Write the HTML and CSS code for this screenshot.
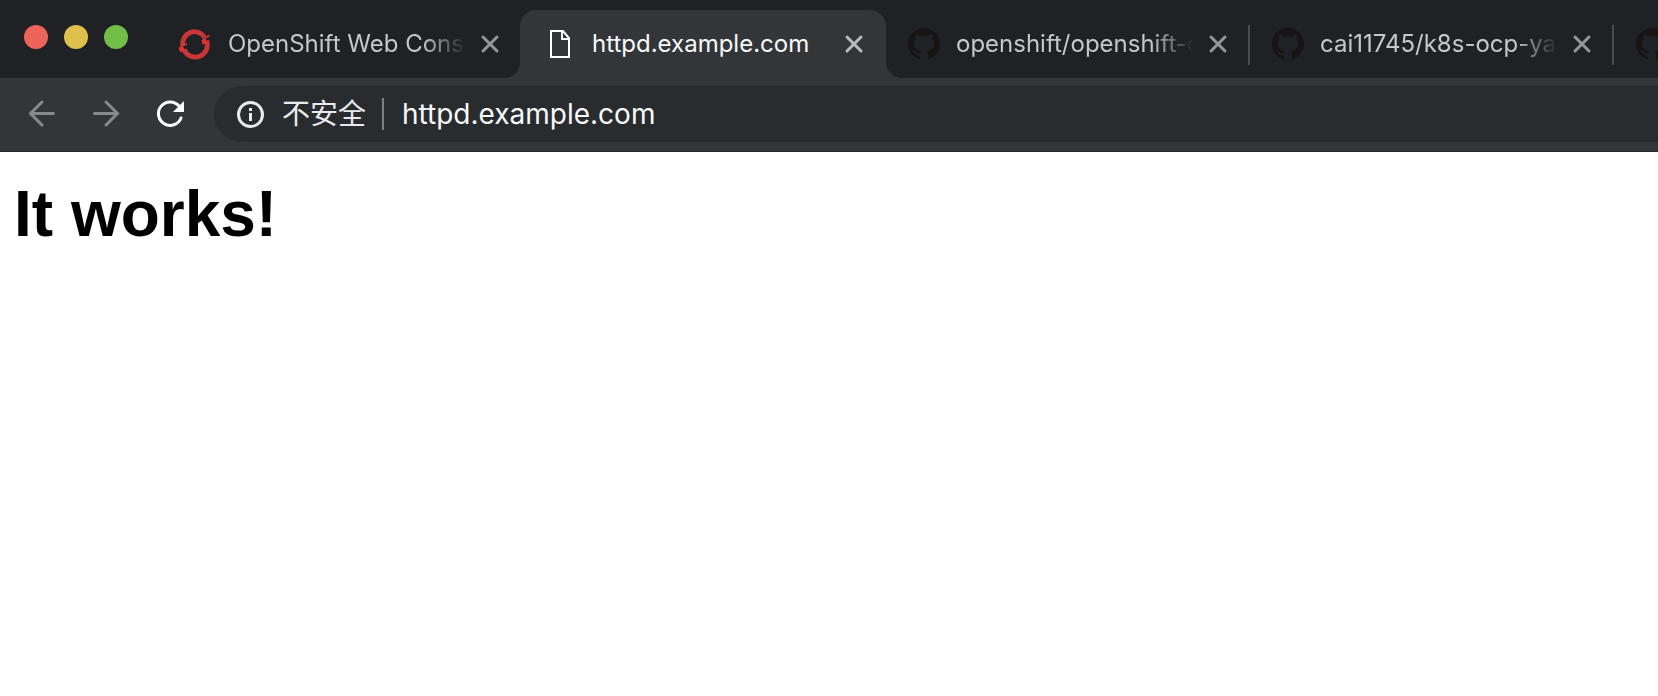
FILE: index.html
```
<!DOCTYPE html>
<html lang="en">
<head>
<meta charset="utf-8">
<title>httpd.example.com</title>
<link rel="stylesheet" href="styles.css">
</head>
<body>
<svg class="symbols" aria-hidden="true">
  <symbol id="github" viewBox="0 0 16 16">
    <path d="M8 0C3.58 0 0 3.58 0 8c0 3.54 2.29 6.53 5.47 7.59.4.07.55-.17.55-.38 0-.19-.01-.82-.01-1.49-2.01.37-2.53-.49-2.69-.94-.09-.23-.48-.94-.82-1.13-.28-.15-.68-.52-.01-.53.63-.01 1.08.58 1.23.82.72 1.21 1.87.87 2.33.66.07-.52.28-.87.51-1.07-1.78-.2-3.64-.89-3.64-3.95 0-.87.31-1.59.82-2.15-.08-.2-.36-1.02.08-2.12 0 0 .67-.21 2.2.82.64-.18 1.32-.27 2-.27s1.36.09 2 .27c1.53-1.04 2.2-.82 2.2-.82.44 1.1.16 1.92.08 2.12.51.56.82 1.27.82 2.15 0 3.07-1.87 3.75-3.65 3.95.29.25.54.73.54 1.48 0 1.07-.01 1.93-.01 2.2 0 .21.15.46.55.38A8.01 8.01 0 0 0 16 8c0-4.42-3.58-8-8-8z"/>
  </symbol>
  <symbol id="close" viewBox="0 0 24 24">
    <path d="M5 5l14 14M19 5L5 19" fill="none" stroke="currentColor" stroke-width="3" stroke-linecap="round"/>
  </symbol>
</svg>
<header class="chrome">
  <div class="tab-strip">
    <div class="window-controls">
      <button class="light light-close" aria-label="Close window"></button>
      <button class="light light-minimize" aria-label="Minimize window"></button>
      <button class="light light-zoom" aria-label="Zoom window"></button>
    </div>
    <nav class="tabs" aria-label="Tabs">
      <div class="tab">
        <svg class="favicon" viewBox="0 0 32 32" aria-hidden="true">
          <path d="M2.700 17.500A12 12 0 0 1 24.500 9" fill="none" stroke="#c93637" stroke-width="4.800"/>
          <path d="M26.500 12.500A12 12 0 0 1 4 21.500" fill="none" stroke="#c93637" stroke-width="4.800"/>
          <path d="M.5 17l6.500-2v2l-6.500 2zM22.500 10l7-3.500v2l-7 3.500z" fill="#c93637"/>
          <path d="M-1.500 19.500l4.500-1.500 2 4.500-5 1.500zM21.500 12l4.500-1.500 1 4.500-4.500 1.500z" fill="#e2332f"/>
        </svg>
        <a class="tab-title" href="#console">OpenShift Web Console</a>
        <button class="tab-close" aria-label="Close tab"><svg viewBox="0 0 24 24"><use href="#close"/></svg></button>
      </div>
      <div class="tab tab-active">
        <svg class="favicon" viewBox="0 0 32 32" aria-hidden="true">
          <path d="M7 3h12l6 7v19H7zM18 3v8h7" fill="none" stroke="#fff" stroke-width="2"/>
        </svg>
        <a class="tab-title" href="#page" aria-current="page">httpd.example.com</a>
        <button class="tab-close" aria-label="Close tab"><svg viewBox="0 0 24 24"><use href="#close"/></svg></button>
      </div>
      <div class="tab">
        <svg class="favicon github" aria-hidden="true"><use href="#github"/></svg>
        <a class="tab-title" href="#openshift">openshift/openshift-c</a>
        <button class="tab-close" aria-label="Close tab"><svg viewBox="0 0 24 24"><use href="#close"/></svg></button>
      </div>
      <div class="tab tab-divided">
        <svg class="favicon github" aria-hidden="true"><use href="#github"/></svg>
        <a class="tab-title" href="#yaml">cai11745/k8s-ocp-ya</a>
        <button class="tab-close" aria-label="Close tab"><svg viewBox="0 0 24 24"><use href="#close"/></svg></button>
      </div>
      <div class="tab tab-divided">
        <svg class="favicon github" aria-hidden="true"><use href="#github"/></svg>
      </div>
    </nav>
  </div>
  <div class="toolbar">
    <button class="nav-button" aria-label="Back">
      <svg viewBox="0 0 32 32"><path d="M27.500 15.500H5M16 4L4.500 15.500L16 27" /></svg>
    </button>
    <button class="nav-button" aria-label="Forward">
      <svg viewBox="0 0 32 32"><path d="M4.500 15.500h23M16 4L27.500 15.500L16 27"/></svg>
    </button>
    <button class="nav-button nav-reload" aria-label="Reload">
      <svg viewBox="0 0 32 32"><path d="M25 8A11.700 11.700 0 1 0 27 20"/><path class="solid" d="M30 3V14H19z"/></svg>
    </button>
    <div class="omnibox">
      <button class="security" lang="zh">
        <svg viewBox="0 0 28 28" aria-hidden="true"><circle cx="14.500" cy="14.500" r="12" fill="none" stroke="currentColor" stroke-width="3"/><path d="M13 8h3v3h-3zM13 13h3v8h-3z" fill="currentColor"/></svg>
        <span>不安全</span>
      </button>
      <input class="address" type="text" aria-label="Address" value="httpd.example.com">
    </div>
  </div>
</header>
<main class="page">
  <h1>It works!</h1>
</main>
</body>
</html>
```
FILE: styles.css
```
* {
  box-sizing: border-box;
}

body {
  margin: 0;
  background: #fff;
  font-family: Inter, "Noto Sans CJK SC", sans-serif;
}

button {
  padding: 0;
  border: 0;
  background: none;
  color: inherit;
  font: inherit;
}

.symbols {
  position: absolute;
  width: 0;
  height: 0;
}

.chrome {
  overflow: hidden;
  background: #323639;
  border-bottom: 1px solid #27272b;
}

.tab-strip {
  display: flex;
  height: 78px;
  padding-top: 10px;
  background: #202124;
}

.window-controls {
  display: flex;
  flex: none;
  gap: 16px;
  width: 156px;
  padding: 15px 0 0 24px;
}

.light {
  width: 24px;
  height: 24px;
  border-radius: 50%;
}

.light-close { background: #ed655a; }
.light-minimize { background: #e0c04c; }
.light-zoom { background: #72be47; }

.tabs {
  display: flex;
  flex: 1;
  min-width: 0;
}

.tab {
  position: relative;
  display: flex;
  flex: none;
  align-items: center;
  width: 364px;
  padding: 0 18px 0 24px;
  color: #c4c7cb;
}

.tab-active {
  width: 366px;
  margin-right: -2px;
  padding-right: 20px;
  background: #323639;
  border-radius: 16px 16px 0 0;
  color: #f8f9fa;
}

.tab-active::before,
.tab-active::after {
  content: "";
  position: absolute;
  bottom: 0;
  width: 16px;
  height: 16px;
}

.tab-active::before {
  right: 100%;
  background: radial-gradient(circle at 0 0, transparent 16px, #323639 16px);
}

.tab-active::after {
  left: 100%;
  background: radial-gradient(circle at 100% 0, transparent 16px, #323639 16px);
}

.tab-divided::before {
  content: "";
  position: absolute;
  left: 0;
  top: 15px;
  width: 2px;
  height: 40px;
  background: #4a4c50;
}

.favicon {
  flex: none;
  width: 32px;
  height: 32px;
  margin-right: 16px;
  overflow: visible;
}

.github {
  fill: #161514;
}

.tab-title {
  flex: 1;
  min-width: 0;
  overflow: hidden;
  color: inherit;
  font-size: 24px;
  line-height: 32px;
  text-decoration: none;
  white-space: nowrap;
  mask-image: linear-gradient(to right, #000 calc(100% - 44px), transparent);
}

.tab-active .tab-title {
  mask-image: none;
}

.tab-close {
  flex: none;
  width: 24px;
  height: 24px;
  margin-left: 12px;
  color: #94969a;
}

.tab-active .tab-close {
  color: #b9bbbd;
}

.tab-close svg,
.nav-button svg {
  display: block;
  width: 100%;
  height: 100%;
}

.toolbar {
  display: flex;
  align-items: center;
  gap: 32px;
  padding: 8px 0 9px 26px;
}

.nav-button {
  flex: none;
  width: 32px;
  height: 32px;
  color: #88898c;
}

.nav-button path {
  fill: none;
  stroke: currentColor;
  stroke-width: 3;
  stroke-linecap: round;
}

.nav-reload {
  color: #fff;
}

.nav-button .solid {
  fill: currentColor;
  stroke: none;
}

.omnibox {
  display: flex;
  flex: 1;
  align-items: center;
  min-width: 0;
  height: 56px;
  margin-left: -4px;
  padding-left: 22px;
  border-radius: 28px 0 0 28px;
  background: #282c2f;
  font-size: 28px;
}

.security {
  display: flex;
  flex: none;
  align-items: center;
  gap: 18px;
  height: 32px;
  padding-right: 16px;
  border-right: 2px solid #7d8083;
  color: #e8eaed;
  line-height: 32px;
}

.security svg {
  width: 28px;
  height: 28px;
}

.address {
  flex: 1;
  min-width: 0;
  padding: 0 0 0 18px;
  border: 0;
  outline: 0;
  background: none;
  color: #f8f9fa;
  font: inherit;
}

.page {
  padding: 26px 14px;
}

h1 {
  margin: 0;
  color: #000;
  font-family: "Liberation Sans", Arial, sans-serif;
  font-size: 64px;
  font-weight: 700;
  line-height: 72px;
}
```
